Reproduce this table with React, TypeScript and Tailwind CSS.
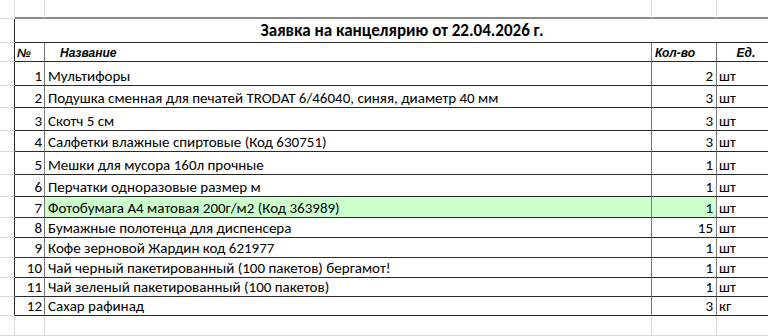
const items = [
  { n: 1, name: "Мультифоры", qty: 2, unit: "шт" },
  { n: 2, name: "Подушка сменная для печатей TRODAT 6/46040, синяя, диаметр 40 мм", qty: 3, unit: "шт" },
  { n: 3, name: "Скотч 5 см", qty: 3, unit: "шт" },
  { n: 4, name: "Салфетки влажные спиртовые (Код 630751)", qty: 3, unit: "шт" },
  { n: 5, name: "Мешки для мусора 160л прочные", qty: 1, unit: "шт" },
  { n: 6, name: "Перчатки одноразовые размер м", qty: 1, unit: "шт" },
  { n: 7, name: "Фотобумага А4 матовая 200г/м2 (Код 363989)", qty: 1, unit: "шт", hl: true },
  { n: 8, name: "Бумажные полотенца для диспенсера", qty: 15, unit: "шт" },
  { n: 9, name: "Кофе зерновой Жардин код 621977", qty: 1, unit: "шт" },
  { n: 10, name: "Чай черный пакетированный (100 пакетов) бергамот!", qty: 1, unit: "шт" },
  { n: 11, name: "Чай зеленый пакетированный (100 пакетов)", qty: 1, unit: "шт" },
  { n: 12, name: "Сахар рафинад", qty: 3, unit: "кг" },
];

// row heights taken from the sheet (it was scaled a little, so they differ)
const heights = ["h-[24px]", "h-[22px]", "h-[23px]", "h-[21px]", "h-[23px]", "h-[22px]", "h-[21px]", "h-[20px]", "h-[20px]", "h-[20px]", "h-[19px]", "h-[19px]"];

const cell = "[font-family:Carlito,Calibri,Lato,sans-serif] text-[15px] leading-[18px] text-black flex items-end";
const head = "[font-family:'Liberation_Sans',Arial,sans-serif] text-[12px] font-bold italic text-black flex items-center pt-[2px]";

export default function App() {
  return (
    <div className="w-[768px] h-[336px] overflow-hidden bg-white">
      <div className="w-[777px] flex flex-col">
        {/* empty sheet row above the table */}
        <div className="flex h-[19px]">
          <div className="w-[15px] border-r border-b border-[#dadada]" />
          <div className="w-[30px] border-r border-r-[#dadada] border-b-2 border-b-[#8a8a8a]" />
          <div className="w-[607px] border-r border-r-[#dadada] border-b-2 border-b-[#8a8a8a]" />
          <div className="w-[65px] border-r border-r-[#dadada] border-b-2 border-b-[#8a8a8a]" />
          <div className="w-[60px] border-b-2 border-b-[#8a8a8a]" />
        </div>

        {/* title */}
        <div className="flex h-[24px]">
          <div className="w-[15px] border-r border-r-[#2a2a2a] border-b border-b-[#dadada]" />
          <div className="w-[762px] border-b border-[#2a2a2a] flex items-center justify-center pl-[12px] [font-family:Carlito,Calibri,Lato,sans-serif] text-[17px] font-bold text-black">
            Заявка на канцелярию от 22.04.2026 г.
          </div>
        </div>

        {/* header */}
        <div className="flex h-[19px]">
          <div className="w-[15px] border-r border-r-[#2a2a2a] border-b border-b-[#dadada]" />
          <div className={`w-[30px] border-r border-r-[#7a7a7a] border-b border-b-[#2a2a2a] pl-[2px] ${head}`}>№</div>
          <div className={`w-[607px] border-r border-r-[#7a7a7a] border-b border-b-[#2a2a2a] pl-[15px] ${head}`}>Название</div>
          <div className={`w-[65px] border-r border-r-[#7a7a7a] border-b border-b-[#2a2a2a] pl-[3px] ${head}`}>Кол-во</div>
          <div className={`w-[60px] border-b border-b-[#2a2a2a] justify-center pr-[2px] ${head}`}>Ед.</div>
        </div>

        {items.map((it, i) => (
          <div key={it.n} className={`flex ${heights[i]}`}>
            <div className="w-[15px] border-r border-r-[#2a2a2a] border-b border-b-[#dadada]" />
            <div className={`w-[30px] border-r border-r-[#7a7a7a] border-b border-b-[#2a2a2a] justify-end pr-[2px] ${cell}`}>{it.n}</div>
            <div className={`w-[607px] border-r border-r-[#7a7a7a] border-b border-b-[#2a2a2a] pl-[3px] whitespace-nowrap ${it.hl ? "bg-[#ccffcc]" : ""} ${cell}`}>
              {it.name}
            </div>
            <div className={`w-[65px] border-r border-r-[#7a7a7a] border-b border-b-[#2a2a2a] justify-end pr-[3px] ${it.hl ? "bg-[#ccffcc]" : ""} ${cell}`}>
              {it.qty}
            </div>
            <div className={`w-[60px] border-b border-b-[#2a2a2a] pl-[2px] ${cell}`}>{it.unit}</div>
          </div>
        ))}

        {/* empty sheet rows below */}
        <div className="flex h-[20px]">
          <div className="w-[15px] border-r border-b border-[#dadada]" />
          <div className="w-[30px] border-r border-b border-[#dadada]" />
          <div className="w-[607px] border-r border-b border-[#dadada]" />
          <div className="w-[65px] border-r border-b border-[#dadada]" />
          <div className="w-[60px] border-b border-[#dadada]" />
        </div>
        <div className="flex h-[20px]">
          <div className="w-[15px] border-r border-[#dadada]" />
          <div className="w-[30px] border-r border-[#dadada]" />
          <div className="w-[607px] border-r border-[#dadada]" />
          <div className="w-[65px] border-r border-[#dadada]" />
          <div className="w-[60px]" />
        </div>
      </div>
    </div>
  );
}
